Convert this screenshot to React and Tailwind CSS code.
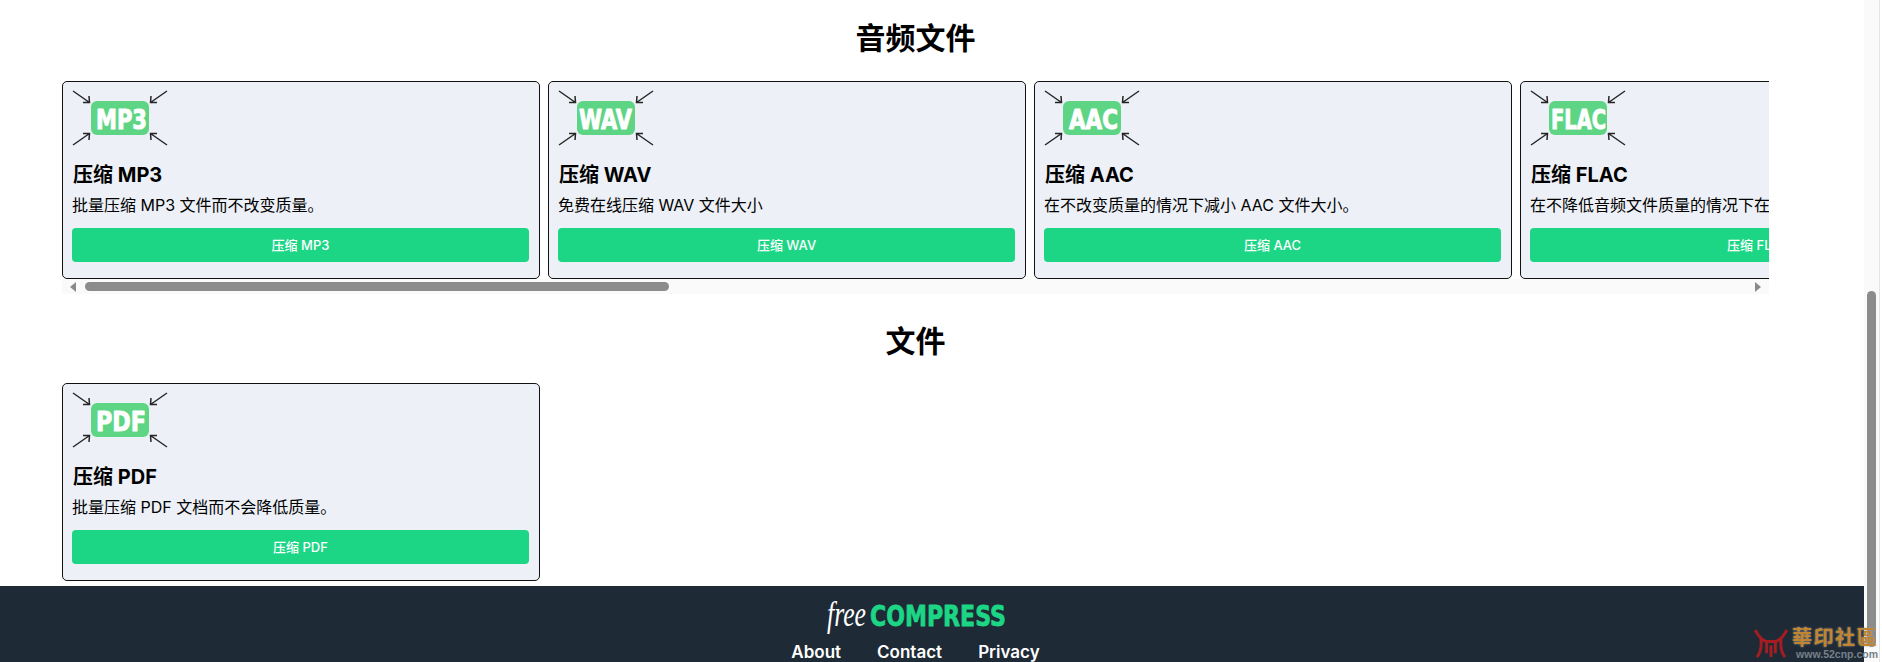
const FONT = 'font-["Inter","Noto_Sans_CJK_SC",sans-serif]';

const AUDIO = [
  { label: 'MP3', textX: 24, textW: 51, desc: '批量压缩 MP3 文件而不改变质量。' },
  { label: 'WAV', textX: 21, textW: 53, desc: '免费在线压缩 WAV 文件大小' },
  { label: 'AAC', textX: 25, textW: 49, desc: '在不改变质量的情况下减小 AAC 文件大小。' },
  { label: 'FLAC', textX: 21, textW: 55, desc: '在不降低音频文件质量的情况下在线压缩 FLAC 文件。' },
];

const DOCS = [
  { label: 'PDF', textX: 24, textW: 50, desc: '批量压缩 PDF 文档而不会降低质量。' },
];

function FormatIcon({ label, textX, textW }) {
  return (
    <svg width="96" height="56" viewBox="0 0 96 56" className="block">
      <g fill="none" stroke="#262626" strokeWidth="1.5">
        <path d="M1 1L17.5 12.5M17 6L17.5 12.5L11 12.5" />
        <path d="M95 1L78.5 12.5M79 6L78.5 12.5L85 12.5" />
        <path d="M1 55L17.5 43.5M17 50L17.5 43.5L11 43.5" />
        <path d="M95 55L78.5 43.5M79 50L78.5 43.5L85 43.5" />
      </g>
      <rect x="19" y="11" width="58" height="34" rx="6" fill="#5ed585" />
      <text
        x={textX}
        y="38.5"
        fill="#fff"
        stroke="#fff"
        strokeWidth="1"
        strokeLinejoin="round"
        fontFamily="DejaVu Sans"
        fontWeight="700"
        fontSize="27"
        textLength={textW}
        lengthAdjust="spacingAndGlyphs"
      >
        {label}
      </text>
    </svg>
  );
}

function ToolCard({ label, textX, textW, desc }) {
  return (
    <div className="w-[478px] h-[198px] shrink-0 rounded-[5px] border border-[#111] bg-[#edf0f7] pl-[9px] pr-[10px] pt-[8px]">
      <FormatIcon label={label} textX={textX} textW={textW} />
      <h3 className="mt-[15px] ml-[1px] text-[20px] leading-[28px] font-bold text-black whitespace-nowrap">压缩 {label}</h3>
      <p className="mt-[4px] text-[16px] leading-[24px] text-black whitespace-nowrap">{desc}</p>
      <button className="mt-[11px] flex h-[34px] w-full items-center justify-center rounded-[4px] bg-[#1cd585] pt-[2px] text-[13px] font-medium text-white whitespace-nowrap">
        压缩 {label}
      </button>
    </div>
  );
}

function Arrow({ dir }) {
  return <span className={dir === 'left'
    ? 'h-0 w-0 border-y-[5px] border-r-[6px] border-y-transparent border-r-[#8a8a8a]'
    : 'h-0 w-0 border-y-[5px] border-l-[6px] border-y-transparent border-l-[#8a8a8a]'} />;
}

function Watermark() {
  return (
    <div className="absolute right-[4px] bottom-[2px] flex items-center gap-[3px]">
      <svg width="36" height="30" viewBox="0 0 37 31">
        <path
          d="M2 2C6 9 9 13 14 14L23 14C28 13 31 9 35 2M8 11C9 19 8 25 4 30M29 11C28 19 29 25 33 30M14 14V26M23 14V26M18.5 18V30"
          fill="none"
          stroke="#a51d22"
          strokeWidth="3"
        />
      </svg>
      <div className="flex flex-col items-end">
        <span className="text-[20px] leading-[22px] font-bold tracking-[1.5px] text-[#c08530] whitespace-nowrap [text-shadow:0_0_2px_#999] font-['Noto_Sans_CJK_TC',sans-serif]">華印社區</span>
        <span className="text-[10.5px] leading-[12px] font-bold text-[#77808a] whitespace-nowrap font-['Liberation_Sans',sans-serif]">www.52cnp.com</span>
      </div>
    </div>
  );
}

export default function App() {
  return (
    <div className={`relative flex h-[662px] w-[1882px] overflow-hidden bg-white ${FONT}`}>
      <div className="flex w-[1864px] flex-col">
        <div className="ml-[62px] w-[1707px]">
          <h2 className="mt-[17px] text-center text-[30px] leading-[42px] font-bold text-black">音频文件</h2>

          <div className="mt-[22px]">
            <div className="flex gap-[8px] overflow-hidden">
              {AUDIO.map(item => <ToolCard key={item.label} {...item} />)}
            </div>
            {/* 가로 스크롤바 */}
            <div className="flex h-[15px] items-center bg-[#fafafa]">
              <span className="ml-[8px] flex w-[6px]"><Arrow dir="left" /></span>
              <div className="ml-[9px] h-[9px] w-[584px] rounded-full bg-[#8c8c8c]" />
              <span className="ml-auto mr-[8px] flex w-[6px]"><Arrow dir="right" /></span>
            </div>
          </div>

          <h2 className="mt-[26px] text-center text-[30px] leading-[42px] font-bold text-black">文件</h2>

          <div className="mt-[21px]">
            <ToolCard {...DOCS[0]} />
          </div>
        </div>

        <footer className="mt-[5px] flex flex-1 flex-col items-center bg-[#1e2a35] pr-[33px]">
          <svg width="180" height="40" viewBox="0 0 180 40" className="mt-[11px] block">
            <text x="1" y="29" fill="#fff" fontFamily="Liberation Serif" fontStyle="italic" fontSize="36" textLength="39" lengthAdjust="spacingAndGlyphs">free</text>
            <text x="44" y="29" fill="#1cd585" stroke="#1cd585" strokeWidth="0.8" strokeLinejoin="round" fontFamily="DejaVu Sans" fontWeight="700" fontSize="28" textLength="136" lengthAdjust="spacingAndGlyphs">COMPRESS</text>
          </svg>
          <nav className="mt-[3px] flex gap-[36px] text-[17px] leading-[24px] font-semibold text-white">
            <span>About</span>
            <span>Contact</span>
            <span>Privacy</span>
          </nav>
        </footer>
      </div>

      {/* 세로 스크롤바 */}
      <div className="flex w-[16px] flex-col items-center border-r border-[#e4e4e4] bg-[#fafafa] pt-[291px]">
        <div className="h-[356px] w-[9px] rounded-full bg-[#8c8c8c]" />
      </div>

      <Watermark />
    </div>
  );
}
